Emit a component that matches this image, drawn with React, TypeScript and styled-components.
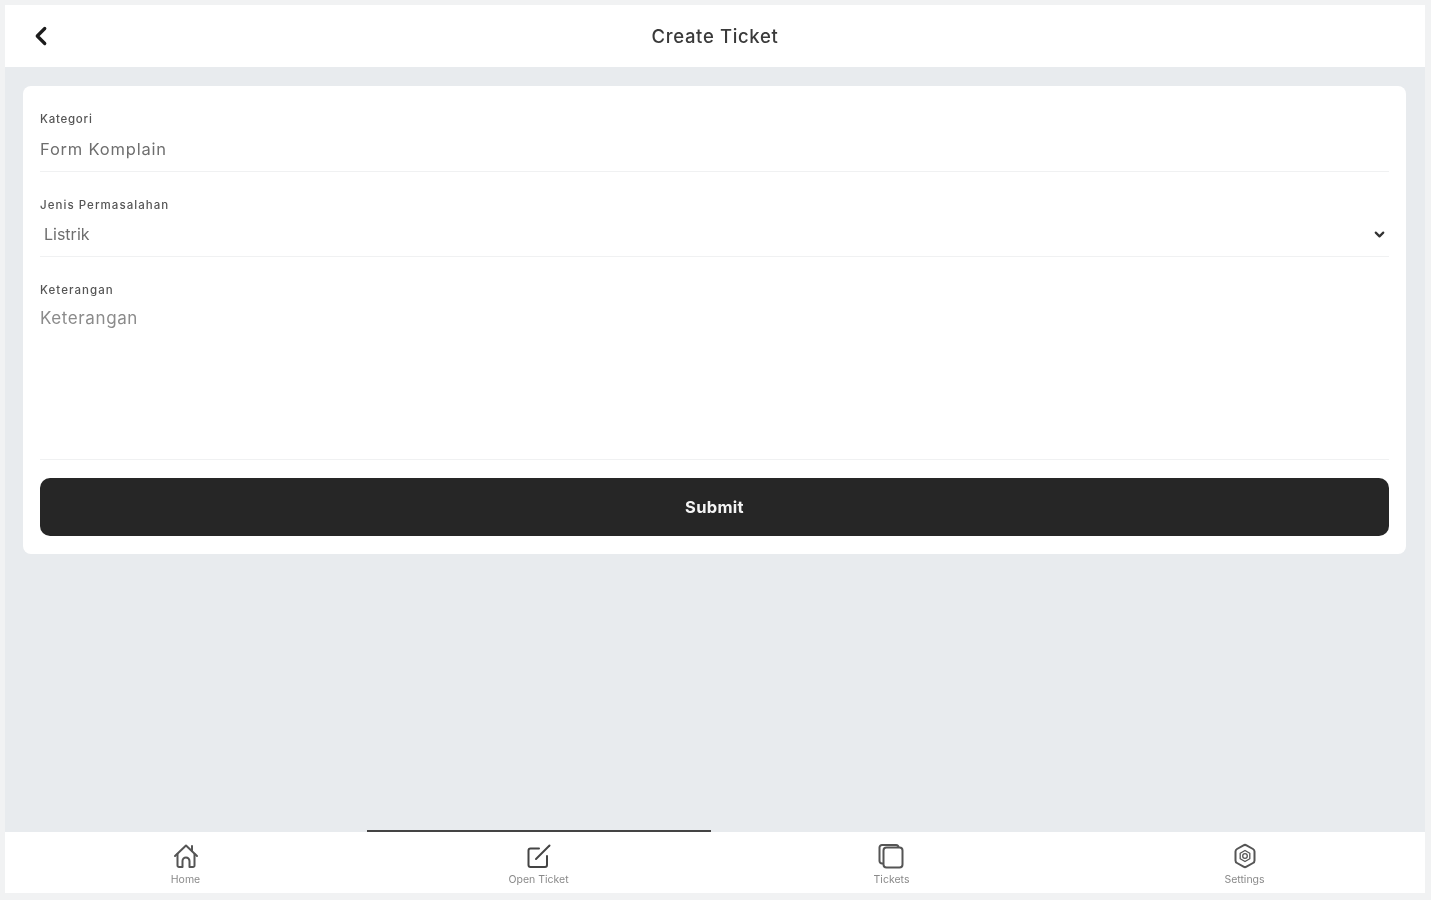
import React from "react"
import styled, { createGlobalStyle } from "styled-components"
import { ChevronLeft, ChevronDown } from "lucide-react"

const GlobalStyle = createGlobalStyle`
    html, body {
        margin: 0;
        padding: 0;
        background: #f1f2f3;
    }
    * {
        box-sizing: border-box;
        font-family: "Inter", "Liberation Sans", sans-serif;
    }
`

const Screen = styled.div`
    height: 900px;
    padding: 5px 6px 7px 5px;
    display: flex;
    flex-direction: column;
    filter: blur(0.6px);
`

const Header = styled.header`
    height: 62px;
    background: #fff;
    display: grid;
    grid-template-columns: 72px 1fr 72px;
    align-items: center;
    flex: none;
`

const BackButton = styled.button`
    border: 0;
    background: none;
    padding: 0 0 0 21px;
    height: 30px;
    color: #1c1c1c;
    display: flex;
    align-items: center;
`

const Title = styled.h1`
    margin: 0;
    text-align: center;
    font-size: 18.5px;
    font-weight: 500;
    letter-spacing: 0.65px;
    color: #3a3a3a;
`

const Main = styled.main`
    flex: 1;
    background: #e8ebee;
    padding: 19px 19px 0 18px;
`

const Card = styled.form`
    background: #fff;
    border-radius: 8px;
    padding: 25px 17px 18px;
    height: 468px;
    display: flex;
    flex-direction: column;
`

const Field = styled.div<{ $height: number }>`
    height: ${p => p.$height}px;
    border-bottom: 1px solid #f0f1f2;
    margin-bottom: 25px;
    display: flex;
    flex-direction: column;
`

const Label = styled.label<{ $wide?: boolean }>`
    font-size: 11.5px;
    line-height: 17px;
    font-weight: 500;
    letter-spacing: ${p => (p.$wide ? "1.05px" : "0.75px")};
    color: #555;
`

const TextValue = styled.div`
    margin-top: 10px;
    font-size: 16.5px;
    line-height: 22px;
    letter-spacing: 0.8px;
    color: #6e6e6e;
`

const SelectRow = styled.div`
    margin-top: 8px;
    padding: 0 2px 0 4px;
    display: flex;
    align-items: center;
    justify-content: space-between;
    font-size: 16px;
    line-height: 24px;
    color: #6e6e6e;
`

const Placeholder = styled.div`
    margin-top: 7px;
    font-size: 17px;
    line-height: 24px;
    color: #8b8b8b;
    letter-spacing: 0.6px;
`

const SubmitButton = styled.button`
    height: 58px;
    flex: none;
    margin-top: -7px;
    border: 0;
    border-radius: 10px;
    background: #262626;
    color: #f4f4f4;
    font-size: 16.5px;
    font-weight: 700;
    letter-spacing: 0.3px;
`

const BottomNav = styled.nav`
    height: 61px;
    flex: none;
    background: #fff;
    padding: 0 4px;
    display: grid;
    grid-template-columns: repeat(4, 1fr);
`

const Tab = styled.div<{ $active?: boolean }>`
    position: relative;
    display: flex;
    flex-direction: column;
    align-items: center;
    padding-top: 10px;
    color: ${p => (p.$active ? "#444" : "#555")};

    &::before {
        content: "";
        display: ${p => (p.$active ? "block" : "none")};
        position: absolute;
        top: -2px;
        left: 5px;
        right: 4px;
        height: 2px;
        background: #444;
    }
`

const TabLabel = styled.span`
    margin-top: 3px;
    font-size: 10.5px;
    line-height: 14px;
    color: #8a8a8a;
`

const HomeIcon = () => (
    <svg width="28" height="28" viewBox="0 0 28 28" fill="none" stroke="currentColor" strokeWidth="2" strokeLinejoin="round" strokeLinecap="round">
        <path d="M3 14 14 3.500 25 14" />
        <path d="M20 4v5" />
        <path d="M5.500 12v11.500a1.500 1.500 0 0 0 1.500 1.500h3.500v-6a3.500 3.500 0 0 1 7 0v6H21a1.500 1.500 0 0 0 1.500-1.500V12" />
    </svg>
)

const PenIcon = () => (
    <svg width="28" height="28" viewBox="0 0 28 28" fill="none" stroke="currentColor" strokeWidth="2" strokeLinejoin="round" strokeLinecap="round">
        <path d="M14 6.500H5.500a2 2 0 0 0-2 2V23a2 2 0 0 0 2 2H20a2 2 0 0 0 2-2v-9" />
        <path d="M11 17 24.500 3.500" />
    </svg>
)

const TicketsIcon = () => (
    <svg width="28" height="28" viewBox="0 0 28 28" fill="none" stroke="currentColor" strokeWidth="2" strokeLinejoin="round">
        <rect x="5.500" y="5.500" width="19" height="20" rx="3" />
        <path d="M5.500 21.500H4a2.500 2.500 0 0 1-2.500-2.500V5.500A2.500 2.500 0 0 1 4 3h14a2.500 2.500 0 0 1 2.500 2.500" />
    </svg>
)

const SettingsIcon = () => (
    <svg width="28" height="28" viewBox="0 0 28 28" fill="none" stroke="currentColor" strokeWidth="2" strokeLinejoin="round">
        <path d="M12.500 3.300a3 3 0 0 1 3 0l6.500 3.700a3 3 0 0 1 1.500 2.600v8.800a3 3 0 0 1-1.500 2.600l-6.500 3.700a3 3 0 0 1-3 0L6 21a3 3 0 0 1-1.500-2.600V9.600A3 3 0 0 1 6 7z" />
        <path d="M14 8.500l4.800 2.800v5.400L14 19.500l-4.800-2.800v-5.400z" strokeWidth="1.300" />
        <circle cx="14" cy="14" r="2.300" strokeWidth="1.300" />
    </svg>
)

const tabs = [
    { label: "Home", icon: <HomeIcon /> },
    { label: "Open Ticket", icon: <PenIcon />, active: true },
    { label: "Tickets", icon: <TicketsIcon /> },
    { label: "Settings", icon: <SettingsIcon /> },
]

export default function App() {
    return (
        <>
            <GlobalStyle />
            <Screen>
                <Header>
                    <BackButton type="button" aria-label="Back">
                        <ChevronLeft size={30} strokeWidth={2.6} />
                    </BackButton>
                    <Title>Create Ticket</Title>
                    <span />
                </Header>

                <Main>
                    <Card>
                        <Field $height={61}>
                            <Label>Kategori</Label>
                            <TextValue>Form Komplain</TextValue>
                        </Field>
                        <Field $height={60}>
                            <Label $wide>Jenis Permasalahan</Label>
                            <SelectRow>
                                Listrik
                                <ChevronDown size={15} strokeWidth={3.5} color="#333" />
                            </SelectRow>
                        </Field>
                        <Field $height={178}>
                            <Label $wide>Keterangan</Label>
                            <Placeholder>Keterangan</Placeholder>
                        </Field>
                        <SubmitButton type="button">Submit</SubmitButton>
                    </Card>
                </Main>

                <BottomNav>
                    {tabs.map(tab => (
                        <Tab key={tab.label} $active={tab.active}>
                            {tab.icon}
                            <TabLabel>{tab.label}</TabLabel>
                        </Tab>
                    ))}
                </BottomNav>
            </Screen>
        </>
    )
}
